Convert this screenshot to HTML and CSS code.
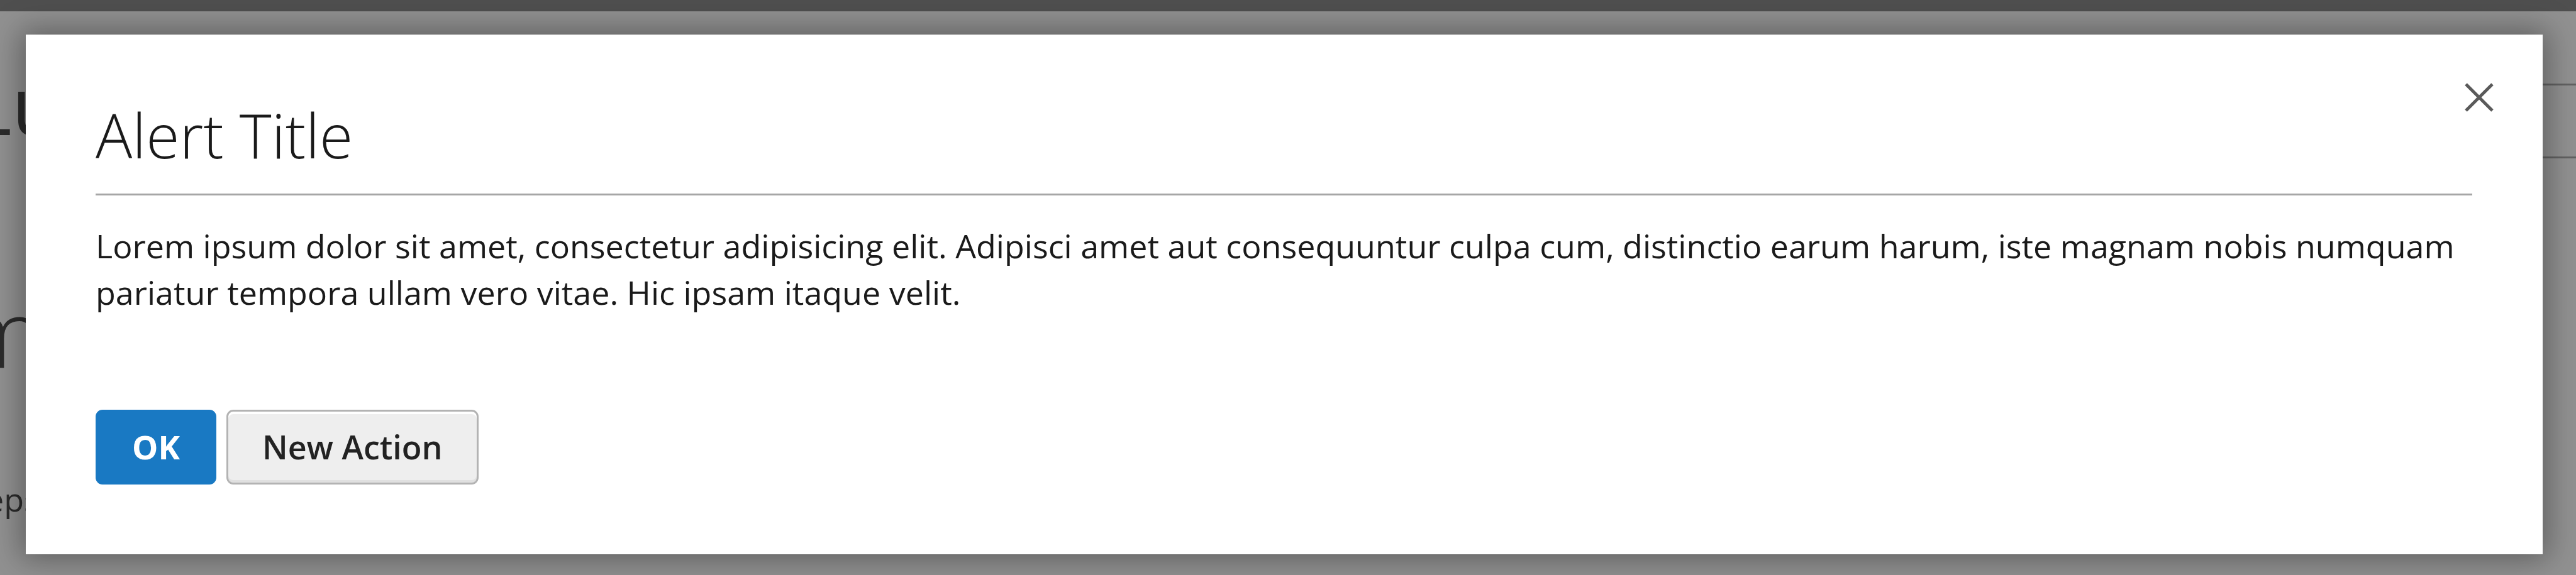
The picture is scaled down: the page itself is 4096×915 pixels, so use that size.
FILE: index.html
```html
<!DOCTYPE html>
<html lang="en">
<head>
<meta charset="utf-8">
<title>Alert Title</title>
<link rel="stylesheet" href="styles.css">
</head>
<body>
<div class="page">
  <div class="topbar"></div>
  <div class="page-text page-logo">Lu</div>
  <div class="page-text page-heading">m</div>
  <div class="page-text page-note">eps</div>
  <div class="page-search"></div>
</div>
<div class="overlay">
  <section class="modal" role="dialog" aria-modal="true" aria-labelledby="modal-title">
    <header class="modal-header">
      <h1 class="modal-title" id="modal-title">Alert Title</h1>
      <button class="modal-close" type="button" aria-label="Close">
        <svg class="close-icon" viewBox="0 0 46 46" aria-hidden="true"><path d="M2 2 44 44M44 2 2 44"/></svg>
      </button>
    </header>
    <p class="modal-content">Lorem ipsum dolor sit amet, consectetur adipisicing elit. Adipisci amet aut consequuntur culpa cum, distinctio earum harum, iste magnam nobis numquam pariatur tempora ullam vero vitae. Hic ipsam itaque velit.</p>
    <footer class="modal-footer">
      <button class="action primary" type="button">OK</button>
      <button class="action" type="button">New Action</button>
    </footer>
  </section>
</div>
</body>
</html>
```
FILE: styles.css
```css
* {
  box-sizing: border-box;
}

body {
  margin: 0;
  min-height: 100vh;
  overflow: hidden;
  background: #919191;
  color: #1a1a1a;
  font-family: "Open Sans", "Noto Sans", sans-serif;
}

.page {
  position: absolute;
  inset: 0;
  overflow: hidden;
  color: #2b2b2b;
}

.topbar {
  height: 18px;
  background: #4f4f4f;
}

.page-text {
  position: absolute;
  line-height: 1;
  white-space: nowrap;
}

.page-logo {
  left: -48px;
  top: 102px;
  font-size: 128px;
  font-weight: 400;
}

.page-heading {
  left: -64px;
  top: 452px;
  font-size: 150px;
  font-weight: 300;
}

.page-note {
  left: -23px;
  top: 768px;
  font-size: 52px;
}

.page-search {
  position: absolute;
  left: 90%;
  right: -10px;
  top: 133px;
  height: 119px;
  border: 3px solid #626262;
}

.overlay {
  position: relative;
  min-height: 100vh;
  padding: 55px 53px 33px 41px;
}

.modal {
  padding: 96px 112px 111px 111px;
  background: #fff;
  box-shadow: 0 0 45px 8px rgba(0, 0, 0, 0.35);
}

.modal-header {
  position: relative;
  padding-bottom: 31px;
  border-bottom: 3px solid #a6a6a6;
}

.modal-title {
  margin: 0;
  font-size: 97px;
  font-weight: 300;
  line-height: 126px;
}

.modal-close {
  position: absolute;
  top: -41px;
  right: -56px;
  display: flex;
  padding: 22px;
  border: 0;
  background: none;
}

.close-icon {
  width: 46px;
  height: 46px;
  fill: none;
  stroke: #5a5a5a;
  stroke-width: 5;
}

.modal-content {
  margin: 0;
  padding: 43px 0 150px;
  font-size: 52px;
  line-height: 74px;
}

.modal-footer {
  display: flex;
  gap: 16px;
}

.action {
  height: 119px;
  padding: 0 54px 2px;
  border: 3px solid #b3b3b3;
  border-radius: 11px;
  background: #eee;
  box-shadow: inset 0 4px 0 #fff, inset 0 -4px 0 #e0e0e0;
  color: #222;
  font-family: inherit;
  font-size: 52px;
  font-weight: 600;
  line-height: 64px;
}

.action.primary {
  padding: 0 55px 2px;
  border-color: #1979c3;
  background: #1979c3;
  box-shadow: none;
  color: #fff;
  font-weight: 700;
}
```
